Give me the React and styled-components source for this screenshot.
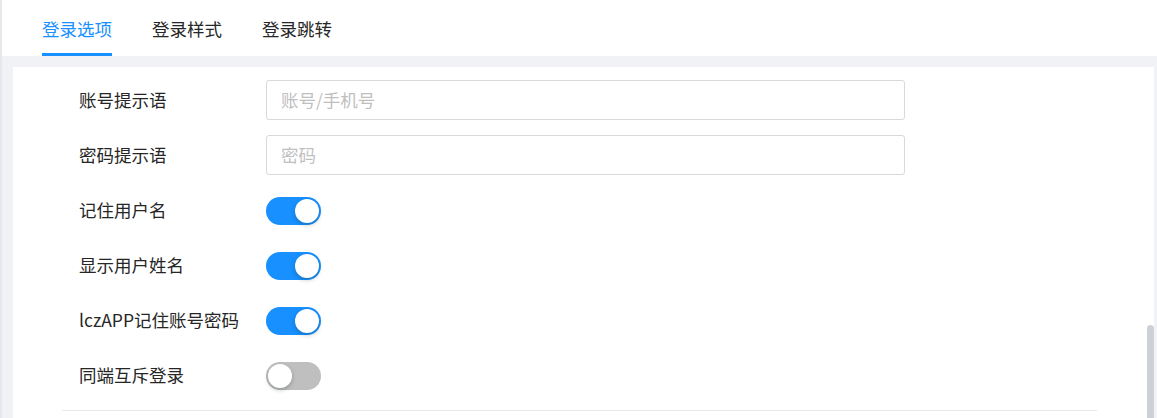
import React, { useState } from "react";
import styled, { createGlobalStyle } from 'styled-components';

const GlobalStyle = createGlobalStyle`
  html, body {
    margin: 0;
    padding: 0;
    background-color: #f0f2f5;
  }
  body {
    font-family: "Noto Sans CJK SC", "Noto Sans", "Liberation Sans", sans-serif;
    color: #262626;
  }
  * {
    box-sizing: border-box;
  }
`

const Page = styled.div`
  height: 418px;
  overflow: hidden;
  display: flex;
  flex-direction: column;
  border-left: 2px solid #e6e8ec;
`
const TabBar = styled.div`
  height: 56px;
  flex-shrink: 0;
  display: flex;
  gap: 40px;
  padding: 0 40px;
  background-color: #ffffff;
`
const Tab = styled.div`
  height: 56px;
  display: flex;
  align-items: center;
  padding-top: 3px;
  font-size: 17.5px;
  color: ${props => props.$active ? '#1890ff' : '#262626'};
  border-bottom: 3px solid ${props => props.$active ? '#1890ff' : 'transparent'};
  cursor: pointer;
`
const Panel = styled.div`
  flex: 1;
  display: flex;
  margin: 11px 3px 0 11px;
  background-color: #ffffff;
`
const Form = styled.div`
  flex: 1;
  padding-top: 5px;
`
const Row = styled.div`
  height: 55px;
  display: flex;
  align-items: center;
  padding-left: 66px;
`
const Label = styled.div`
  width: 187px;
  font-size: 17.5px;
`
const Input = styled.input`
  width: 639px;
  height: 40px;
  padding: 0 14px;
  border: 1px solid #d9d9d9;
  border-radius: 3px;
  font-family: inherit;
  font-size: 17.5px;
  color: #262626;
  outline: none;
  &::placeholder {
    color: #bfbfbf;
  }
`
const Switch = styled.button`
  width: 55px;
  height: 28px;
  margin-top: 2px;
  padding: 2px;
  border: none;
  border-radius: 14px;
  display: flex;
  align-items: center;
  justify-content: ${props => props.$on ? 'flex-end' : 'flex-start'};
  background-color: ${props => props.$on ? '#1890ff' : '#bfbfbf'};
  cursor: pointer;
`
const Knob = styled.span`
  width: 24px;
  height: 24px;
  border-radius: 50%;
  background-color: #ffffff;
  box-shadow: 0 2px 4px rgba(0, 35, 11, 0.25);
`
const Divider = styled.div`
  height: 1px;
  width: 1035px;
  margin: 8px 0 0 49px;
  background-color: #e8e8e8;
`
const ScrollTrack = styled.div`
  width: 7px;
  display: flex;
  flex-direction: column;
`
const ScrollThumb = styled.div`
  flex: 1;
  margin-top: 258px;
  border-radius: 4px 4px 0 0;
  background-color: #cdd0d6;
`

const tabs = ['登录选项', '登录样式', '登录跳转'];

function App() {
  const [activeTab, setActiveTab] = useState(0);
  const [switches, setSwitches] = useState({
    rememberName: true,
    showName: true,
    appRemember: true,
    mutex: false,
  })

  const toggle = (name) => {
    setSwitches({
      ...switches,
      [name]: !switches[name],
    })
  }

  const switchRows = [
    { name: 'rememberName', label: '记住用户名' },
    { name: 'showName', label: '显示用户姓名' },
    { name: 'appRemember', label: 'lczAPP记住账号密码' },
    { name: 'mutex', label: '同端互斥登录' },
  ]

  return (
    <Page>
      <GlobalStyle />
      <TabBar>
        {tabs.map((item, i) => (
          <Tab key={item} $active={i === activeTab} onClick={() => setActiveTab(i)}>{item}</Tab>
        ))}
      </TabBar>
      <Panel>
        <Form>
          <Row>
            <Label>账号提示语</Label>
            <Input type="text" placeholder="账号/手机号" />
          </Row>
          <Row>
            <Label>密码提示语</Label>
            <Input type="text" placeholder="密码" />
          </Row>
          {switchRows.map((item) => (
            <Row key={item.name}>
              <Label>{item.label}</Label>
              <Switch $on={switches[item.name]} onClick={() => toggle(item.name)}>
                <Knob />
              </Switch>
            </Row>
          ))}
          <Divider />
        </Form>
        <ScrollTrack>
          <ScrollThumb />
        </ScrollTrack>
      </Panel>
    </Page>
  )
}

export default App;
